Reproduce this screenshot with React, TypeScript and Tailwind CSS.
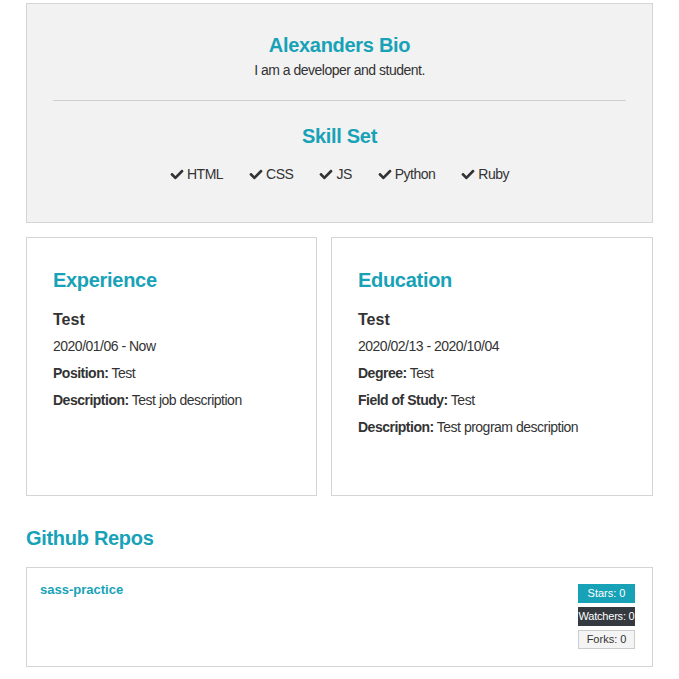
const teal = 'text-[#17a2b8]'

function Check() {
  return (
    <svg viewBox="0 0 512 512" className="w-[14px] h-[13px] fill-[#333]">
      <path d="M173.898 439.404l-166.4-166.4c-9.997-9.997-9.997-26.206 0-36.204l36.203-36.204c9.997-9.998 26.207-9.998 36.204 0L192 312.69 432.095 72.596c9.997-9.997 26.207-9.997 36.204 0l36.203 36.204c9.997 9.997 9.997 26.206 0 36.204l-294.4 294.401c-9.998 9.997-26.207 9.997-36.204-.001z" />
    </svg>
  )
}

const skills = ['HTML', 'CSS', 'JS', 'Python', 'Ruby']

export default function App() {
  return (
    <div className="min-h-[679px] bg-white text-[#333] font-['Liberation_Sans',Arial,sans-serif] px-[26px] pt-[3px]">
      {/* Bio */}
      <div className="border border-[#d4d4d4] bg-[#f2f2f2] px-[26px] pt-[29px] pb-[38px] text-center">
        <h1 className={`text-[20px] leading-[24px] font-bold tracking-[-0.3px] ${teal}`}>Alexanders Bio</h1>
        <p className="mt-[3px] text-[14px] leading-[20px] tracking-[-0.5px]">I am a developer and student.</p>
        <hr className="mt-[20px] border-0 border-t border-[#cfcfcf]" />
        <h2 className={`mt-[23px] text-[20px] leading-[24px] font-bold tracking-[-0.3px] ${teal}`}>Skill Set</h2>
        <div className="mt-[16px] flex justify-center gap-[26px] text-[14px] leading-[20px] tracking-[-0.5px]">
          {skills.map((s) => (
            <div key={s} className="flex items-center gap-[3px]">
              <Check />
              <span>{s}</span>
            </div>
          ))}
        </div>
      </div>

      {/* Experience / Education */}
      <div className="mt-[14px] flex gap-[14px]">
        <div className="w-[291px] h-[259px] border border-[#d4d4d4] px-[26px] pt-[30px]">
          <h2 className={`text-[20px] leading-[24px] font-bold tracking-[-0.3px] ${teal}`}>Experience</h2>
          <h3 className="mt-[18px] text-[16px] leading-[20px] font-bold">Test</h3>
          <div className="mt-[6px] text-[14px] leading-[20px] tracking-[-0.5px] flex flex-col gap-[7px]">
            <p>2020/01/06 - Now</p>
            <p><b>Position:</b> Test</p>
            <p><b>Description:</b> Test job description</p>
          </div>
        </div>
        <div className="flex-1 h-[259px] border border-[#d4d4d4] px-[26px] pt-[30px]">
          <h2 className={`text-[20px] leading-[24px] font-bold tracking-[-0.3px] ${teal}`}>Education</h2>
          <h3 className="mt-[18px] text-[16px] leading-[20px] font-bold">Test</h3>
          <div className="mt-[6px] text-[14px] leading-[20px] tracking-[-0.5px] flex flex-col gap-[7px]">
            <p>2020/02/13 - 2020/10/04</p>
            <p><b>Degree:</b> Test</p>
            <p><b>Field of Study:</b> Test</p>
            <p><b>Description:</b> Test program description</p>
          </div>
        </div>
      </div>

      {/* Repos */}
      <h2 className={`mt-[30px] text-[20px] leading-[24px] font-bold tracking-[-0.3px] ${teal}`}>Github Repos</h2>
      <div className="mt-[17px] h-[100px] border border-[#d4d4d4] flex justify-between pl-[13px] pr-[17px]">
        <a className={`mt-[14px] text-[13px] leading-[16px] font-bold ${teal}`}>sass-practice</a>
        <div className="mt-[16px] w-[57px] flex flex-col gap-[4px] text-[11px] text-center">
          <span className="h-[19px] leading-[19px] bg-[#17a2b8] text-white">Stars: 0</span>
          <span className="h-[19px] leading-[19px] bg-[#343a40] text-white whitespace-nowrap tracking-[-0.2px]">Watchers: 0</span>
          <span className="h-[19px] leading-[17px] bg-[#f4f4f4] border border-[#cccccc] text-[#333]">Forks: 0</span>
        </div>
      </div>
    </div>
  )
}
